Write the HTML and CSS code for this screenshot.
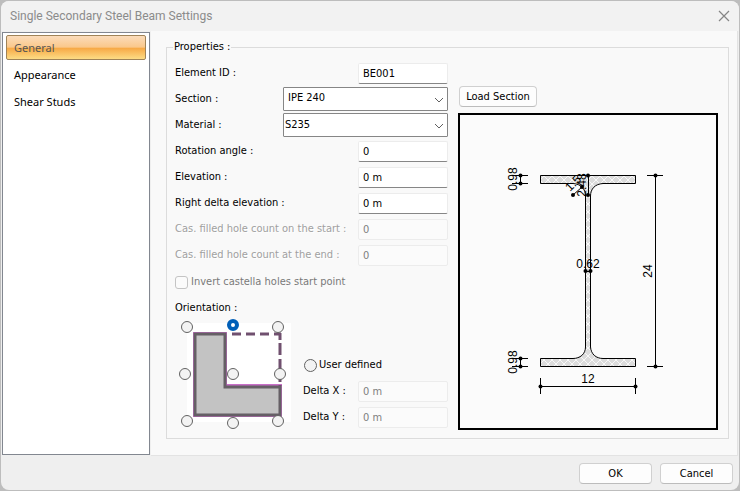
FILE: index.html
```html
<!DOCTYPE html>
<html lang="en">
<head>
<meta charset="utf-8">
<title>Single Secondary Steel Beam Settings</title>
<link rel="stylesheet" href="styles.css">
</head>
<body>
<main class="dialog">
  <header class="titlebar">
    <h1 class="title">Single Secondary Steel Beam Settings</h1>
    <button class="close" type="button" aria-label="Close">
      <svg width="12" height="12" viewBox="0 0 12 12"><path d="M1 1L11 11M11 1L1 11" stroke="#858585" stroke-width="1.2" fill="none"/></svg>
    </button>
  </header>
  <div class="content">
    <nav class="sidebar">
      <a class="tab tab-active" href="#general">General</a>
      <a class="tab" href="#appearance">Appearance</a>
      <a class="tab" href="#studs">Shear Studs</a>
    </nav>
    <form class="panel" id="general">
      <fieldset class="group">
        <legend>Properties :</legend>
        <div class="columns">
          <div class="fields">
            <div class="row"><label for="eid">Element ID :</label><input class="text" id="eid" type="text" value="BE001"></div>
            <div class="row"><label for="section">Section :</label>
              <span class="combo"><select class="select select-section" id="section"><option>IPE 240</option></select>
                <svg class="chevron" width="10" height="6" viewBox="0 0 10 6"><path d="M1 1L5 5L9 1" fill="none" stroke="#606060"/></svg></span></div>
            <div class="row"><label for="material">Material :</label>
              <span class="combo"><select class="select" id="material"><option>S235</option></select>
                <svg class="chevron" width="10" height="6" viewBox="0 0 10 6"><path d="M1 1L5 5L9 1" fill="none" stroke="#606060"/></svg></span></div>
            <div class="row"><label for="rot">Rotation angle :</label><input class="text" id="rot" type="text" value="0"></div>
            <div class="row"><label for="elev">Elevation :</label><input class="text" id="elev" type="text" value="0 m"></div>
            <div class="row"><label for="delta">Right delta elevation :</label><input class="text" id="delta" type="text" value="0 m"></div>
            <div class="row row-off"><label for="hs">Cas. filled hole count on the start :</label><input class="text" id="hs" type="text" value="0" disabled></div>
            <div class="row row-off"><label for="he">Cas. filled hole count at the end :</label><input class="text" id="he" type="text" value="0" disabled></div>
            <div class="check-row"><input class="check" id="invert" type="checkbox" disabled><label for="invert">Invert castella holes start point</label></div>
            <div class="caption">Orientation :</div>
            <div class="orientation">
              <div class="profile">
                <svg class="profile-art" viewBox="0 0 104 99">
                  <rect width="104" height="99" fill="#fff"/>
                  <path d="M8 11H38V63H93V92H8Z" fill="#c3c3c3" stroke="#c86fc8" stroke-width="4"/>
                  <path d="M8 11H38V64H93V92H8Z" fill="#c3c3c3" stroke="#655f65" stroke-width="3"/>
                  <path d="M45 11H94" fill="none" stroke="#70506f" stroke-width="3" stroke-dasharray="9 5"/>
                  <path d="M93 10V63" fill="none" stroke="#70506f" stroke-width="3" stroke-dasharray="7 3 12 4 12 4"/>
                </svg>
                <input class="radio pin top-left" type="radio" name="anchor" aria-label="Top left">
                <input class="radio pin top" type="radio" name="anchor" aria-label="Top" checked>
                <input class="radio pin top-right" type="radio" name="anchor" aria-label="Top right">
                <input class="radio pin left" type="radio" name="anchor" aria-label="Left">
                <input class="radio pin middle" type="radio" name="anchor" aria-label="Center">
                <input class="radio pin right" type="radio" name="anchor" aria-label="Right">
                <input class="radio pin bottom-left" type="radio" name="anchor" aria-label="Bottom left">
                <input class="radio pin bottom" type="radio" name="anchor" aria-label="Bottom">
                <input class="radio pin bottom-right" type="radio" name="anchor" aria-label="Bottom right">
              </div>
              <div class="custom">
                <div class="user-row"><input class="radio" id="user" type="radio" name="anchor"><label for="user">User defined</label></div>
                <div class="row"><label for="dx">Delta X :</label><input class="text" id="dx" type="text" value="0 m" disabled></div>
                <div class="row"><label for="dy">Delta Y :</label><input class="text" id="dy" type="text" value="0 m" disabled></div>
              </div>
            </div>
          </div>
          <div class="preview">
            <button class="button load" type="button">Load Section</button>
            <div class="canvas">
              <svg class="drawing" viewBox="460 115 256 313">
                <defs>
                  <pattern id="hatch" width="8" height="8" patternUnits="userSpaceOnUse">
                    <rect width="8" height="8" fill="#dcdcdc"/>
                    <path d="M0 0L8 8M8 0L0 8" stroke="#f8f8f8" stroke-width="1"/>
                  </pattern>
                </defs>
                <path d="M540.5 175.5H635.5V183.5H603C595 184 590.500 189 590.500 196V347C591 354 596 358.500 603 358.500H635.5V366.500H540.5V358.500H573C580 358.500 585.500 354 585.500 347V196C585.500 189 581 184 573 183.500H540.500Z" fill="url(#hatch)" stroke="#000"/>
                <g fill="none" stroke="#000">
                  <path d="M512 175.500H528M512 183.500H528M520.500 175V184M512 358.500H528M512 366.500H528M520.500 358V367"/>
                  <path d="M647 175.500H663M647 366.500H663M655.500 175V367"/>
                  <path d="M540.500 378V394M635.500 378V394M540 386.500H636"/>
                  <path d="M588.500 175V195M573 195L582 187M584 271.500H592"/>
                </g>
                <g>
                  <circle cx="520.500" cy="175.500" r="2"/><circle cx="520.500" cy="183.500" r="2"/>
                  <circle cx="520.500" cy="358.500" r="2"/><circle cx="520.500" cy="366.500" r="2"/>
                  <circle cx="655.500" cy="175.500" r="2"/><circle cx="655.500" cy="366.500" r="2"/>
                  <circle cx="540.500" cy="386.500" r="2"/><circle cx="635.500" cy="386.500" r="2"/>
                  <circle cx="588" cy="175.500" r="2"/><circle cx="588" cy="195" r="2"/>
                  <circle cx="573" cy="195" r="2"/><circle cx="582" cy="187" r="2"/>
                  <circle cx="585.500" cy="271" r="2"/><circle cx="590.500" cy="271" r="2"/>
                </g>
                <g class="dims">
                  <text transform="translate(517 179) rotate(-90)">0.98</text>
                  <text transform="translate(517 362) rotate(-90)">0.98</text>
                  <text transform="translate(652 271) rotate(-90)">24</text>
                  <text transform="translate(586 185) rotate(-90)">2.48</text>
                  <text transform="translate(576 186) rotate(-45)">1.5</text>
                  <text x="588" y="268">0.62</text>
                  <text x="588" y="383">12</text>
                </g>
              </svg>
            </div>
          </div>
        </div>
      </fieldset>
    </form>
  </div>
  <footer class="footer">
    <button class="button action" type="button">OK</button>
    <button class="button action" type="button">Cancel</button>
  </footer>
</main>
</body>
</html>
```
FILE: styles.css
```css
* { box-sizing: border-box; }

body {
  margin: 0;
  padding: 1px;
  min-height: 100vh;
  display: flex;
  background: #bdbdbd;
  color: #000;
  font: 11px/14px "DejaVu Sans Condensed", "DejaVu Sans", sans-serif;
}

input, select, button { font: inherit; color: inherit; margin: 0; }

.dialog {
  flex: 1;
  display: flex;
  flex-direction: column;
  background: #efefef;
  border-radius: 8px;
  overflow: hidden;
}

.titlebar {
  display: flex;
  align-items: center;
  justify-content: space-between;
  height: 30px;
  padding: 0 9px;
  background: #f2f2f2;
}

.title {
  margin: 0;
  font: 12px/16px Roboto, sans-serif;
  color: #8b8b8b;
}

.close {
  display: flex;
  padding: 0;
  border: 0;
  background: none;
}

.content {
  flex: 1;
  display: flex;
  gap: 1px;
  padding: 0 1px;
}

.sidebar {
  width: 148px;
  margin: 1px 0;
  padding: 2px 3px;
  background: #fff;
  border: 1px solid #828790;
}

.tab {
  display: block;
  height: 25px;
  margin-bottom: 2px;
  padding: 0 7px;
  border: 1px solid transparent;
  border-radius: 2px;
  font: 11px/24px "Noto Sans", sans-serif;
  color: #000;
  text-decoration: none;
}

.tab-active {
  border-color: #a08357;
  background: linear-gradient(#fbdcbb, #fac88b 48%, #f7aa47 54%, #fddc85);
  color: #555;
}

.panel {
  flex: 1;
  padding: 9px 8px 16px 15px;
  background: #f9f9f9;
  border-right: 1px solid #e3e3e3;
  border-bottom: 1px solid #e3e3e3;
}

.group {
  min-width: 0;
  height: 100%;
  margin: 0;
  padding: 0;
  border: 1px solid #dcdcdc;
}

.group legend { margin-left: 6px; padding: 0 1px; }

.columns {
  display: grid;
  grid-template-columns: 273px 1fr;
  gap: 10px;
  padding: 6px 10px 7px 8px;
}

.row {
  display: flex;
  align-items: center;
  justify-content: space-between;
  height: 26px;
}

.row-off label { color: #a0a0a0; text-shadow: 1px 1px #fff; }

.text {
  width: 90px;
  height: 21px;
  padding: 0 4px;
  background: #fff;
  border: 1px solid #ececec;
  border-bottom-color: #868686;
  border-radius: 2px;
}

.text:disabled {
  background: #fbfbfb;
  border-color: #ececec;
  color: #808080;
}

.combo { position: relative; display: flex; }

.select {
  appearance: none;
  width: 165px;
  height: 24px;
  padding: 0 1px;
  background: #fff;
  border: 1px solid #868686;
  border-radius: 1px;
}

.select-section { padding: 0 4px 3px; }

.chevron { position: absolute; right: 4px; top: 10px; pointer-events: none; }

.check-row {
  display: flex;
  align-items: center;
  gap: 3px;
  height: 28px;
  color: #7a7a7a;
}

.check {
  appearance: none;
  width: 13px;
  height: 13px;
  background: #fbfbfb;
  border: 1px solid #c4c4c4;
  border-radius: 3px;
}

.caption { height: 21px; line-height: 24px; }

.orientation {
  display: flex;
  justify-content: space-between;
  height: 113px;
  padding-left: 12px;
}

.profile {
  position: relative;
  width: 104px;
  height: 99px;
  margin-top: 6px;
}

.profile-art { display: block; width: 100%; }

.custom {
  display: flex;
  flex-direction: column;
  justify-content: flex-end;
  width: 145px;
}

.user-row {
  display: flex;
  align-items: center;
  gap: 2px;
  height: 26px;
  padding-left: 1px;
}

.radio {
  appearance: none;
  width: 12px;
  height: 12px;
  background: #f3f3f3;
  border: 1px solid #626262;
  border-radius: 50%;
}

.radio:checked { background: #fff; border: 4px solid #005fb8; }

.user-row .radio { width: 13px; height: 13px; }

.pin { position: absolute; transform: translate(-50%, -50%); }
.top-left { left: 0; top: 4px; }
.top { left: 46px; top: 2px; }
.top-right { left: 91px; top: 4px; }
.left { left: -2px; top: 51px; }
.middle { left: 46px; top: 51px; }
.right { left: 93px; top: 51px; }
.bottom-left { left: 0; top: 98px; }
.bottom { left: 46px; top: 100px; }
.bottom-right { left: 91px; top: 98px; }

.preview {
  display: flex;
  flex-direction: column;
  align-items: flex-start;
  gap: 6px;
  padding-top: 26px;
}

.button {
  height: 21px;
  padding: 0 6px;
  background: #fdfdfd;
  border: 1px solid #d0d0d0;
  border-bottom-color: #bcbcbc;
  border-radius: 4px;
}

.load { width: 78px; margin-left: 1px; padding: 0; }

.canvas {
  flex: 1;
  width: 100%;
  background: #fbfbfb;
  border: 2px solid #000;
}

.drawing { display: block; width: 100%; }

.dims {
  font: 12px "Liberation Sans", sans-serif;
  text-anchor: middle;
}

.footer {
  display: flex;
  justify-content: flex-end;
  gap: 8px;
  padding: 7px 6px 6px;
}

.action { width: 73px; }
```
